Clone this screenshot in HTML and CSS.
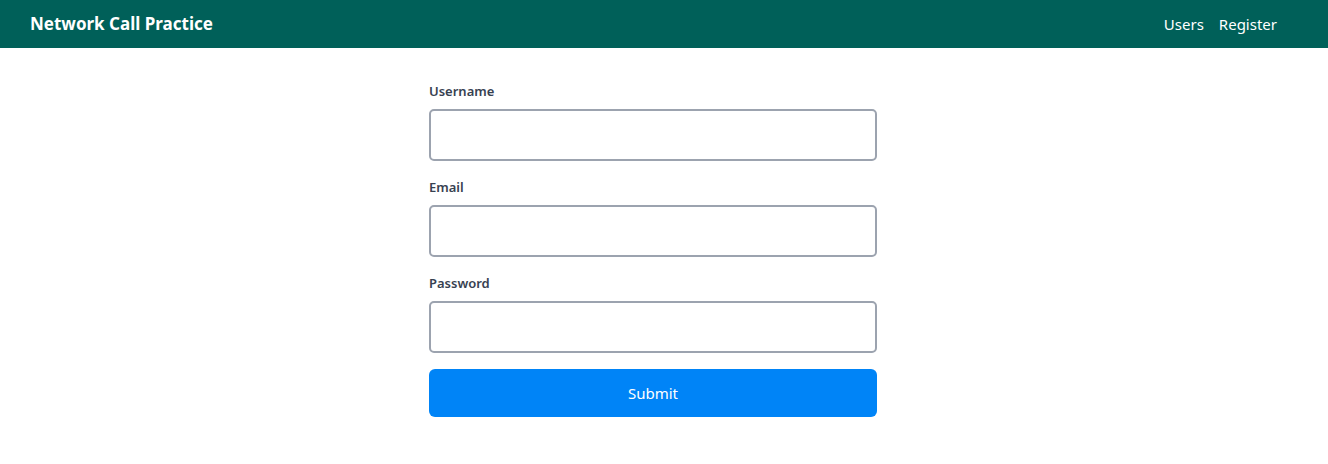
FILE: index.html
```html
<!DOCTYPE html>
<html lang="en">
<head>
<meta charset="utf-8">
<title>Network Call Practice</title>
<link rel="stylesheet" href="styles.css">
</head>
<body>
<header class="topbar">
  <div class="brand">Network Call Practice</div>
  <nav class="nav">
    <a class="nav-link" href="#">Users</a>
    <a class="nav-link" href="#">Register</a>
  </nav>
</header>
<main class="page">
  <form class="form">
    <label class="field">
      <span class="label">Username</span>
      <input class="input" type="text">
    </label>
    <label class="field">
      <span class="label">Email</span>
      <input class="input" type="email">
    </label>
    <label class="field">
      <span class="label">Password</span>
      <input class="input" type="password">
    </label>
    <button class="submit" type="button">Submit</button>
  </form>
</main>
</body>
</html>
```
FILE: styles.css
```css
* { box-sizing: border-box; }
html, body { margin: 0; padding: 0; }
body {
  font-family: "Noto Sans", "Open Sans", sans-serif;
  background: #ffffff;
  color: #374151;
}
.topbar {
  height: 48px;
  background: #006059;
  display: flex;
  align-items: center;
  justify-content: space-between;
  padding: 0 51px 1px 30px;
  color: #ffffff;
}
.brand {
  font-size: 17px;
  font-weight: 700;
}
.nav {
  display: flex;
  gap: 15px;
}
.nav-link {
  color: #ffffff;
  text-decoration: none;
  font-size: 15px;
}
.page {
  display: flex;
  justify-content: center;
  padding: 33px 22px 0 0;
}
.form {
  width: 448px;
  display: flex;
  flex-direction: column;
}
.field {
  display: flex;
  flex-direction: column;
  margin-bottom: 16px;
}
.label {
  font-size: 13px;
  font-weight: 600;
  line-height: 20px;
  margin-bottom: 8px;
  color: #374151;
}
.input {
  height: 52px;
  border: 2px solid #9ca3af;
  border-radius: 5px;
  background: #fff;
  font: inherit;
  padding: 0 12px;
  outline: none;
}
.submit {
  height: 48px;
  border: none;
  border-radius: 6px;
  background: #0084f7;
  color: #fff;
  font-family: inherit;
  font-size: 15px;
  cursor: pointer;
}
```
